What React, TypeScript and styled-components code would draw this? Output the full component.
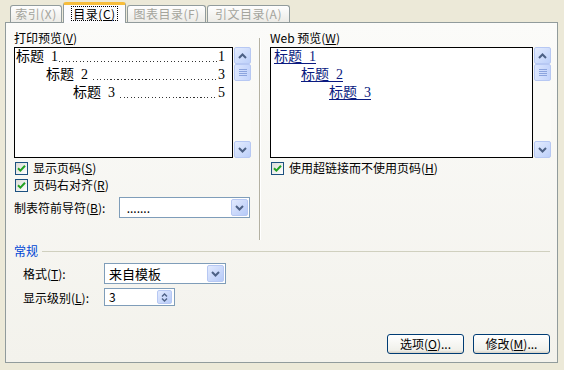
import React from "react";
import styled, { createGlobalStyle } from "styled-components";

const Global = createGlobalStyle`
  html, body { margin: 0; padding: 0; background: #ECE9D8; }
  body {
    font-family: "Noto Sans CJK SC", "Noto Sans", sans-serif;
    font-size: 12px;
    color: #000;
  }
  * { box-sizing: border-box; }
`;

const Dialog = styled.div`
  width: 564px;
  height: 370px;
  background: #ECE9D8;
  padding: 0 6px 0 5px;
  display: flex;
  flex-direction: column;
  overflow: hidden;
`;

const TabStrip = styled.div`
  height: 22px;
  padding-left: 5px;
  display: flex;
  align-items: flex-end;
  gap: 1px;
`;

const Tab = styled.div<{ $w: number; $active?: boolean }>`
  width: ${(p) => p.$w}px;
  height: ${(p) => (p.$active ? 21 : 17)}px;
  margin-bottom: ${(p) => (p.$active ? -1 : 0)}px;
  position: relative;
  z-index: ${(p) => (p.$active ? 2 : 0)};
  display: flex;
  align-items: center;
  justify-content: center;
  line-height: 14px;
  letter-spacing: 0.5px;
  color: ${(p) => (p.$active ? "#000" : "#A4A49C")};
  border: 1px solid #919B9C;
  border-bottom: none;
  border-top: ${(p) => (p.$active ? "3px solid #F7BD3B" : "1px solid #919B9C")};
  border-radius: 3px 3px 0 0;
  background: ${(p) =>
    p.$active ? "#FCFCFE" : "linear-gradient(#FEFEFE, #ECEBE6)"};
  padding-bottom: ${(p) => (p.$active ? 2 : 0)}px;
`;

const FocusText = styled.span`
  outline: 1px dotted #000;
  padding: 0 1px;
  line-height: 13px;
`;

const Panel = styled.div`
  height: 341px;
  border: 1px solid #919B9C;
  background: linear-gradient(#FBFBF9, #F3F2EC);
  display: flex;
  flex-direction: column;
`;

const TopRow = styled.div`
  height: 217px;
  display: flex;
  padding: 8px 0 0 8px;
`;

const Column = styled.div<{ $w: number }>`
  width: ${(p) => p.$w}px;
  display: flex;
  flex-direction: column;
`;

const Divider = styled.div`
  width: 2px;
  margin: 7px 9px 0 8px;
  border-left: 1px solid #B4B1A2;
  border-right: 1px solid #FFFFFF;
`;

const Label = styled.div`
  height: 14px;
  line-height: 14px;
  margin-bottom: 2px;
  white-space: nowrap;
`;

const PreviewRow = styled.div`
  height: 111px;
  display: flex;
`;

const PreviewBox = styled.div`
  flex: 1;
  min-width: 0;
  border: 1px solid #000;
  background: #FFF;
  padding: 0 7px 0 1px;
  font-family: "Liberation Serif", "Noto Sans CJK SC", serif;
  font-size: 14px;
`;

const TocLine = styled.div<{ $indent: number }>`
  height: 18px;
  line-height: 18px;
  display: flex;
  padding-left: ${(p) => p.$indent}px;
  white-space: nowrap;
`;

const Leader = styled.span<{ $gap: number }>`
  flex: 1;
  min-width: 0;
  height: 1px;
  align-self: flex-end;
  margin: 0 1px 4px ${(p) => p.$gap}px;
  background-image: repeating-linear-gradient(
    90deg,
    #333 0 1px,
    transparent 1px 3.5px
  );
`;

const WebLink = styled.span`
  color: #0A1A80;
  text-decoration: underline;
  text-underline-offset: 2px;
`;

const ScrollTrack = styled.div`
  width: 17px;
  flex: none;
  margin-left: 1px;
  background: #FAFAF7;
  display: flex;
  flex-direction: column;
`;

const ScrollBtn = styled.div`
  width: 17px;
  height: 17px;
  border: 1px solid #B7C8F3;
  border-radius: 2px;
  background: linear-gradient(135deg, #E4ECFE, #BDD0FA);
  display: flex;
  align-items: center;
  justify-content: center;
`;

const Thumb = styled.div`
  width: 17px;
  height: 17px;
  border: 1px solid #B7C8F3;
  border-radius: 2px;
  background: linear-gradient(90deg, #DCE6FE, #C4D4FB);
  display: flex;
  flex-direction: column;
  align-items: center;
  justify-content: center;
  gap: 1px;
`;

const Grip = styled.div`
  width: 8px;
  height: 1px;
  background: #8CA4DE;
`;

const TrackSpace = styled.div`
  flex: 1;
`;

const CheckRow = styled.div<{ $mt: number }>`
  height: 14px;
  margin-top: ${(p) => p.$mt}px;
  padding-left: 1px;
  display: flex;
  align-items: center;
  gap: 5px;
  line-height: 14px;
  white-space: nowrap;
`;

const CheckBox = styled.div`
  width: 13px;
  height: 13px;
  border: 1px solid #1C5180;
  background: linear-gradient(135deg, #DCDCD7, #FFFFFF);
  display: flex;
  align-items: center;
  justify-content: center;
`;

const FieldRow = styled.div<{ $mt: number; $labelW: number }>`
  margin-top: ${(p) => p.$mt}px;
  display: grid;
  grid-template-columns: ${(p) => p.$labelW}px auto;
  align-items: center;
  white-space: nowrap;
`;

const Combo = styled.div<{ $w: number; $h?: number }>`
  width: ${(p) => p.$w}px;
  height: ${(p) => p.$h ?? 21}px;
  border: 1px solid #7F9DB9;
  background: #FFF;
  display: flex;
  align-items: center;
  padding: 1px;
`;

const ComboText = styled.div<{ $size?: number }>`
  flex: 1;
  padding-left: 3px;
  font-size: ${(p) => p.$size ?? 12}px;
  line-height: 14px;
`;

const ComboBtn = styled.div`
  width: 17px;
  height: 17px;
  border: 1px solid #B7C8F3;
  border-radius: 2px;
  background: linear-gradient(135deg, #E2EAFE, #B6CAF8);
  display: flex;
  align-items: center;
  justify-content: center;
`;

const SpinBtn = styled.div`
  width: 15px;
  height: 14px;
  margin-right: 1px;
  border: 1px solid #B7C8F3;
  border-radius: 2px;
  background: linear-gradient(135deg, #E2EAFE, #B6CAF8);
  display: flex;
  flex-direction: column;
  align-items: center;
  justify-content: center;
  gap: 1px;
`;

const GroupHeader = styled.div`
  margin: 4px 7px 0 8px;
  height: 14px;
  display: flex;
  align-items: center;
  gap: 4px;
`;

const GroupTitle = styled.span`
  color: #0046D5;
  line-height: 14px;
`;

const GroupLine = styled.div`
  flex: 1;
  height: 1px;
  background: #D0D0BF;
`;

const GroupBody = styled.div`
  padding-left: 17px;
  display: flex;
  flex-direction: column;
`;

const Spacer = styled.div`
  flex: 1;
`;

const ButtonRow = styled.div`
  display: flex;
  justify-content: flex-end;
  gap: 9px;
  padding: 0 7px 8px 0;
`;

const Button = styled.button<{ $w: number }>`
  width: ${(p) => p.$w}px;
  height: 20px;
  border: 1px solid #003C74;
  border-radius: 3px;
  background: linear-gradient(#FFFFFF, #F0F0EA 85%, #D6D0C5);
  font-family: "Noto Sans CJK SC", "Noto Sans", sans-serif;
  font-size: 12px;
  line-height: 14px;
  padding: 0;
  color: #000;
`;

const Chevron = ({ dir, w = 9 }: { dir: "up" | "down"; w?: number }) => (
  <svg width={w} height={6} viewBox="0 0 9 6">
    <path
      d={dir === "up" ? "M1 5 L4.5 1.5 L8 5" : "M1 1 L4.5 4.5 L8 1"}
      fill="none"
      stroke="#4D6185"
      strokeWidth="2"
    />
  </svg>
);

const SmallChevron = ({ dir }: { dir: "up" | "down" }) => (
  <svg width={7} height={4} viewBox="0 0 7 4">
    <path
      d={dir === "up" ? "M1 3.5 L3.5 1 L6 3.5" : "M1 0.5 L3.5 3 L6 0.5"}
      fill="none"
      stroke="#4D6185"
      strokeWidth="1.4"
    />
  </svg>
);

const Check = () => (
  <svg width={9} height={9} viewBox="0 0 9 9">
    <path d="M1 4.2 L3.4 6.6 L8 1.8" fill="none" stroke="#21A121" strokeWidth="2" />
  </svg>
);

const Scrollbar = () => (
  <ScrollTrack>
    <ScrollBtn>
      <Chevron dir="up" />
    </ScrollBtn>
    <Thumb>
      <Grip />
      <Grip />
      <Grip />
      <Grip />
    </Thumb>
    <TrackSpace />
    <ScrollBtn>
      <Chevron dir="down" />
    </ScrollBtn>
  </ScrollTrack>
);

const sp = "\u00a0\u00a0";

const tocEntries = [
  { title: `标题${sp}1`, page: "1", indent: 0, gap: 1 },
  { title: `标题${sp}2`, page: "3", indent: 30, gap: 5 },
  { title: `标题${sp}3`, page: "5", indent: 57, gap: 5 },
];

const webEntries = [
  { title: `标题${sp}1`, indent: 2 },
  { title: `标题${sp}2`, indent: 29 },
  { title: `标题${sp}3`, indent: 57 },
];

export default function App() {
  return (
    <>
      <Global />
      <Dialog>
        <TabStrip>
          <Tab $w={52}>索引(X)</Tab>
          <Tab $w={63} $active>
            <FocusText>
              目录(<u>C</u>)
            </FocusText>
          </Tab>
          <Tab $w={79}>图表目录(F)</Tab>
          <Tab $w={83}>引文目录(A)</Tab>
        </TabStrip>
        <Panel>
          <TopRow>
            <Column $w={237}>
              <Label>
                打印预览(<u>V</u>)
              </Label>
              <PreviewRow>
                <PreviewBox>
                  {tocEntries.map((e) => (
                    <TocLine key={e.title} $indent={e.indent}>
                      <span>{e.title}</span>
                      <Leader $gap={e.gap} />
                      <span>{e.page}</span>
                    </TocLine>
                  ))}
                </PreviewBox>
                <Scrollbar />
              </PreviewRow>
              <CheckRow $mt={3}>
                <CheckBox>
                  <Check />
                </CheckBox>
                <span>
                  显示页码(<u>S</u>)
                </span>
              </CheckRow>
              <CheckRow $mt={3}>
                <CheckBox>
                  <Check />
                </CheckBox>
                <span>
                  页码右对齐(<u>R</u>)
                </span>
              </CheckRow>
              <FieldRow $mt={5} $labelW={105}>
                <span>
                  制表符前导符(<u>B</u>):
                </span>
                <Combo $w={131}>
                  <ComboText>&nbsp;.......</ComboText>
                  <ComboBtn>
                    <Chevron dir="down" />
                  </ComboBtn>
                </Combo>
              </FieldRow>
            </Column>
            <Divider />
            <Column $w={281}>
              <Label>
                Web 预览(<u>W</u>)
              </Label>
              <PreviewRow>
                <PreviewBox>
                  {webEntries.map((e) => (
                    <TocLine key={e.title} $indent={e.indent}>
                      <WebLink>{e.title}</WebLink>
                    </TocLine>
                  ))}
                </PreviewBox>
                <Scrollbar />
              </PreviewRow>
              <CheckRow $mt={3}>
                <CheckBox>
                  <Check />
                </CheckBox>
                <span>
                  使用超链接而不使用页码(<u>H</u>)
                </span>
              </CheckRow>
            </Column>
          </TopRow>
          <GroupHeader>
            <GroupTitle>常规</GroupTitle>
            <GroupLine />
          </GroupHeader>
          <GroupBody>
            <FieldRow $mt={5} $labelW={81}>
              <span>
                格式(<u>T</u>):
              </span>
              <Combo $w={122}>
                <ComboText $size={13}>来自模板</ComboText>
                <ComboBtn>
                  <Chevron dir="down" />
                </ComboBtn>
              </Combo>
            </FieldRow>
            <FieldRow $mt={4} $labelW={81}>
              <span>
                显示级别(<u>L</u>):
              </span>
              <Combo $w={71} $h={18}>
                <ComboText>3</ComboText>
                <SpinBtn>
                  <SmallChevron dir="up" />
                  <SmallChevron dir="down" />
                </SpinBtn>
              </Combo>
            </FieldRow>
          </GroupBody>
          <Spacer />
          <ButtonRow>
            <Button $w={77}>
              选项(<u>O</u>)...
            </Button>
            <Button $w={77}>
              修改(<u>M</u>)...
            </Button>
          </ButtonRow>
        </Panel>
      </Dialog>
    </>
  );
}
